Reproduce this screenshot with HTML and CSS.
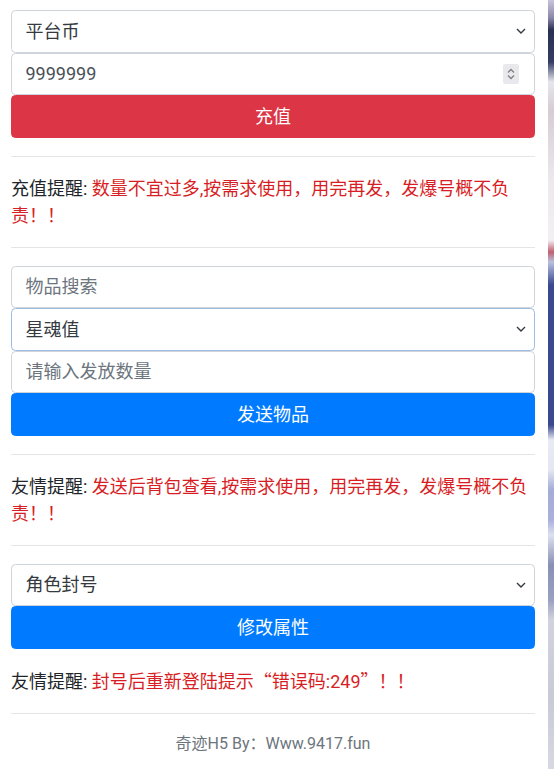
FILE: index.html
```html
<!DOCTYPE html>
<html lang="zh-CN">
<head>
    <meta charset="utf-8">
    <title>GM工具</title>
    <link rel="stylesheet" href="styles.css">
</head>
<body>
    <div class="page">
        <div class="panel">
            <form class="group" id="rechargeForm">
                <select class="field field-select" name="type">
                    <option>平台币</option>
                </select>
                <input class="field field-number" type="number" name="num" value="9999999">
                <button type="button" class="btn btn-red">充值</button>
            </form>
            <hr>
            <p class="tip">充值提醒: <span class="tip-text">数量不宜过多,按需求使用，用完再发，发爆号概不负责！！</span></p>
            <hr>
            <form class="group" id="itemForm">
                <input class="field" type="text" name="search" placeholder="物品搜索">
                <select class="field field-select field-active" name="item">
                    <option>星魂值</option>
                </select>
                <input class="field" type="text" name="count" placeholder="请输入发放数量">
                <button type="button" class="btn btn-blue">发送物品</button>
            </form>
            <hr>
            <p class="tip">友情提醒: <span class="tip-text">发送后背包查看,按需求使用，用完再发，发爆号概不负责！！</span></p>
            <hr>
            <form class="group" id="roleForm">
                <select class="field field-select" name="action">
                    <option>角色封号</option>
                </select>
                <button type="button" class="btn btn-blue">修改属性</button>
            </form>
            <p class="tip">友情提醒: <span class="tip-text">封号后重新登陆提示<span class="quote">“</span>错误码:249<span class="quote">”</span>！！</span></p>
            <hr>
            <p class="footer">奇迹H5 By：Www.9417.fun</p>
        </div>
        <div class="backdrop"></div>
    </div>
</body>
</html>
```

FILE: styles.css
```css
body {
    margin: 0;
    font-family: "Segoe UI", Roboto, "Noto Sans CJK SC", sans-serif;
    font-size: 18px;
    line-height: 1.5;
    color: #212529;
}
.page {
    display: flex;
    min-height: 100vh;
}
.panel {
    width: 548px;
    box-sizing: border-box;
    padding: 10px 13px 0 11px;
    background-color: #fff;
}
.backdrop {
    flex: 1;
    background: linear-gradient(to bottom,
        #c8c4dc 0, #8a86a8 18px, #2a3050 30px, #343c64 62px, #e6e6ee 82px,
        #d6ccd4 110px, #ece8ec 180px, #f2f0f2 240px, #c06070 252px, #b8c0e0 262px,
        #3a4890 285px, #3a4890 425px, #e8eaf4 440px, #e4e6f2 470px, #a4acd8 490px,
        #aab0dc 520px, #dde0f0 535px, #8a90b4 565px, #9aa0c0 600px, #d2d2de 620px,
        #c8cad6 700px, #d8d8e2 769px);
}
.group {
    margin: 0 0 18px;
}
.field {
    display: block;
    width: 100%;
    height: 42.5px;
    box-sizing: border-box;
    margin: 0;
    padding: 6.75px 13.5px;
    font-family: inherit;
    font-size: 18px;
    line-height: 1.5;
    color: #495057;
    background-color: #fff;
    border: 1px solid #ced4da;
    border-radius: 4.5px;
    outline: none;
}
.field::placeholder {
    color: #6c757d;
}
.field-select {
    -webkit-appearance: none;
    appearance: none;
    padding-right: 30px;
    color: #343a40;
    background-image: url("data:image/svg+xml,%3csvg xmlns='http://www.w3.org/2000/svg' width='10' height='6' viewBox='0 0 10 6'%3e%3cpath d='M1 1l4 4 4-4' fill='none' stroke='%23343a40' stroke-width='1.4'/%3e%3c/svg%3e");
    background-repeat: no-repeat;
    background-position: right 8px center;
    background-size: 10px 6px;
}
.field-active {
    border-color: #9dbde0;
}
.field-number {
    -moz-appearance: textfield;
    background-image: url("data:image/svg+xml,%3csvg xmlns='http://www.w3.org/2000/svg' width='16' height='20' viewBox='0 0 16 20'%3e%3crect width='16' height='20' rx='2' fill='%23e9e9ed'/%3e%3cpath d='M5 8.5l3-3 3 3M5 11.5l3 3 3-3' fill='none' stroke='%23808080' stroke-width='1.3'/%3e%3c/svg%3e");
    background-repeat: no-repeat;
    background-position: right 15px center;
    background-size: 16px 20px;
}
.field-number::-webkit-inner-spin-button,
.field-number::-webkit-outer-spin-button {
    -webkit-appearance: none;
    margin: 0;
}
.btn {
    display: block;
    width: 100%;
    height: 42.5px;
    padding: 6.75px 13.5px;
    font-family: inherit;
    font-size: 18px;
    line-height: 1.5;
    color: #fff;
    text-align: center;
    border: 1px solid transparent;
    border-radius: 4.5px;
    cursor: pointer;
}
.btn-red {
    background-color: #dc3545;
    border-color: #dc3545;
}
.btn-blue {
    background-color: #007bff;
    border-color: #007bff;
}
hr {
    margin: 18px 0;
    border: 0;
    border-top: 1px solid rgba(0, 0, 0, 0.1);
}
.tip {
    margin: 0 0 18px;
    padding-right: 4px;
    line-height: 27px;
}
.tip-text {
    color: #d81e25;
}
.quote {
    font-family: "Noto Sans CJK SC", sans-serif;
}
.footer {
    margin: 0;
    padding-bottom: 18px;
    font-size: 16px;
    line-height: 24px;
    color: #6c757d;
    text-align: center;
}
```
